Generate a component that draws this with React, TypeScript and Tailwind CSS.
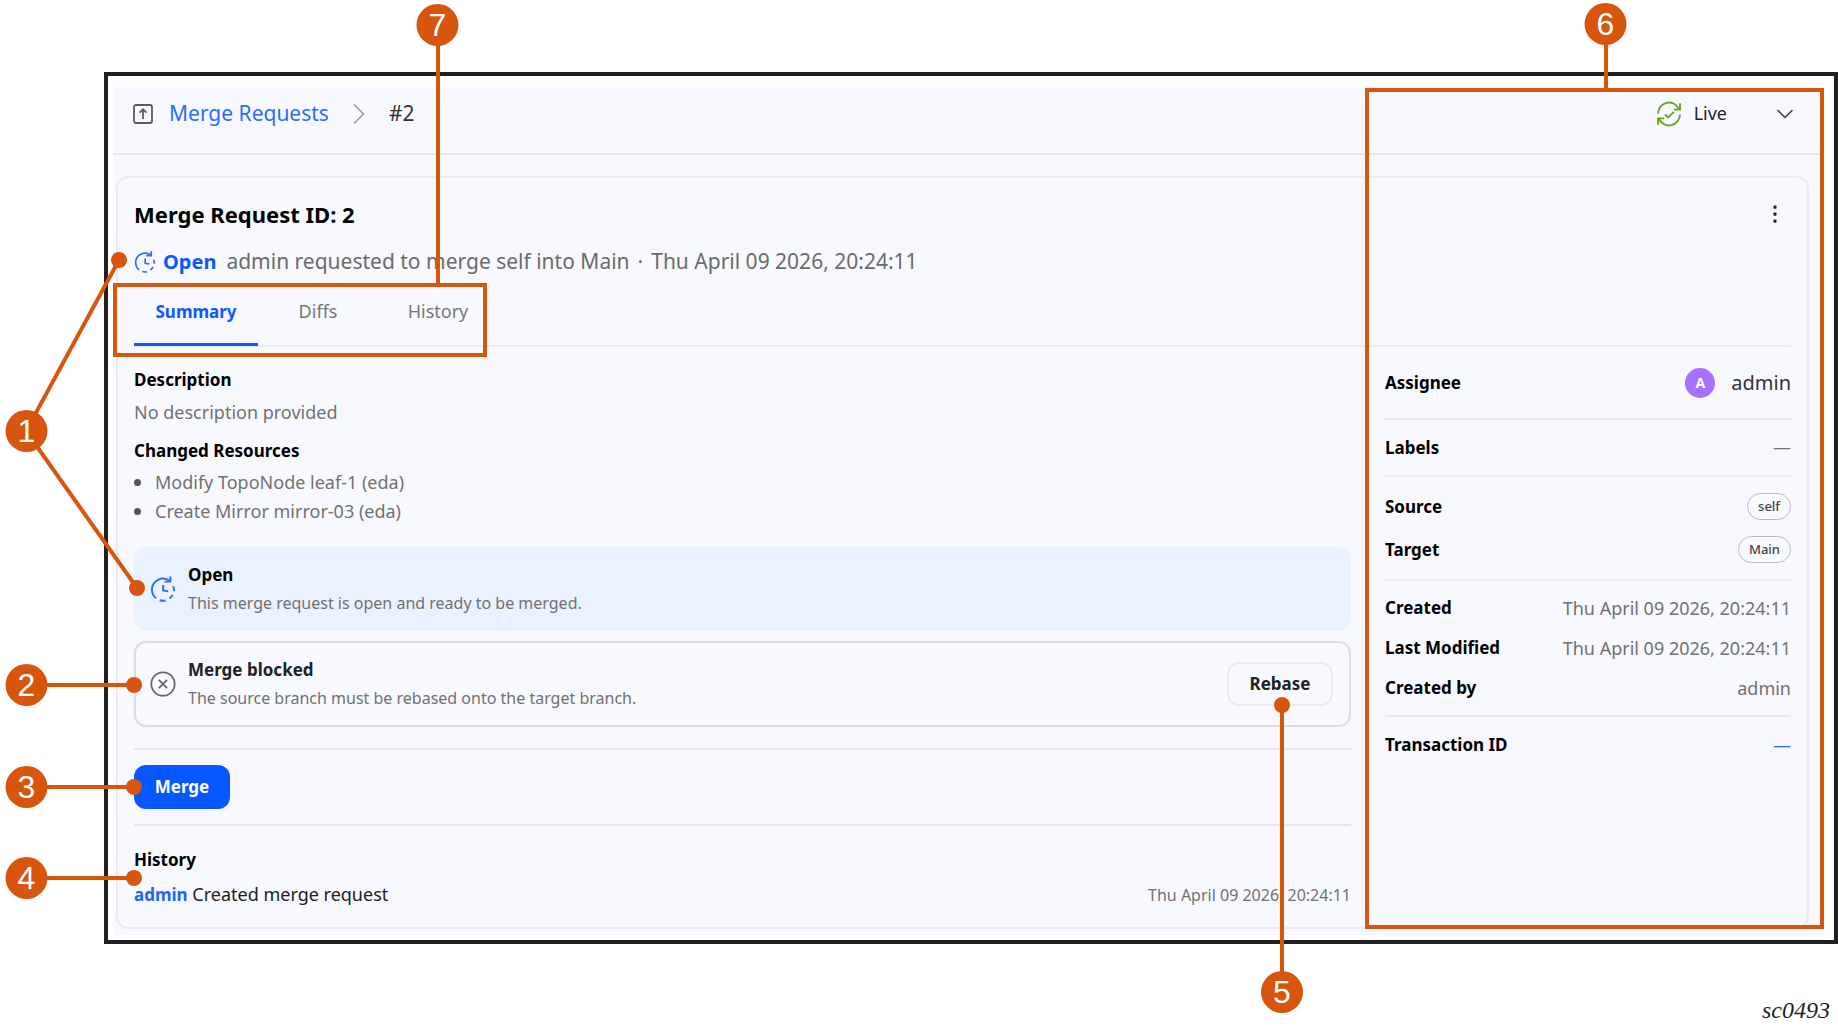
import type { ReactNode } from "react";
import { ChevronDown, ChevronRight } from "lucide-react";

const RESOURCES = ["Modify TopoNode leaf-1 (eda)", "Create Mirror mirror-03 (eda)"];

const DATE = "Thu April 09 2026, 20:24:11";

function OpenIcon({ className }: { className: string }) {
  return (
    <svg viewBox="0 0 24 24" fill="none" stroke="currentColor" strokeWidth="1.8" className={className} aria-hidden="true">
      <path d="M18.4 4.8A10.2 10.2 0 0 0 1.8 13M1.8 13A10.2 10.2 0 0 0 5.6 20.6M9 22.4a10.2 10.2 0 0 0 5.4.2M18 20.8a10.2 10.2 0 0 0 2.8-3.4M22.2 14a10.2 10.2 0 0 0-.8-4.4" />
      <path d="M18.8.4v4.8h-5.4" />
      <path d="M12.2 8.2v5.2l4.6.8" />
    </svg>
  );
}

function BlockedIcon() {
  return (
    <svg viewBox="0 0 24 24" fill="none" stroke="currentColor" strokeWidth="1.6" className="w-[26px] h-[26px] shrink-0 text-[#666]" aria-hidden="true">
      <circle cx="12" cy="12" r="10.8" />
      <path d="m8.2 8.2 7.6 7.6M15.8 8.2l-7.6 7.6" />
    </svg>
  );
}

function LiveIcon() {
  return (
    <svg viewBox="0 0 26 26" fill="none" stroke="currentColor" strokeWidth="1.9" className="w-[26px] h-[26px] text-[#68a51c]" aria-hidden="true">
      <path d="M2 12.5A11 11 0 0 1 23 8M24 2.2V8.6h-6.2" />
      <path d="M24 13.5A11 11 0 0 1 3 18M2 23.8V17.4h6.2" />
      <path d="m9 13.5 3 3 6-5.6" />
    </svg>
  );
}

function UploadIcon() {
  return (
    <svg viewBox="0 0 20 20" fill="none" stroke="currentColor" strokeWidth="1.8" className="w-5 h-5 text-[#5c5c5c]" aria-hidden="true">
      <rect x="1" y="1" width="18" height="18" rx="2" />
      <path d="M10 15V5.4M6.6 8.6 10 5.2l3.4 3.4" />
    </svg>
  );
}

function Row({ label, className, children }: { label: string; className: string; children: ReactNode }) {
  return (
    <div className={`flex items-center justify-between ${className}`}>
      <dt className="text-[17px] font-bold text-black">{label}</dt>
      <dd className="text-[18px] text-[#717171] flex items-center">{children}</dd>
    </div>
  );
}

function Pill({ children }: { children: ReactNode }) {
  return (
    <span className="h-[27px] px-[10px] flex items-center rounded-full border border-[#b9bcc2] text-[13px] font-medium text-[#444]">
      {children}
    </span>
  );
}

function Badge({ x, y, n }: { x: number; y: number; n: number }) {
  return (
    <g>
      <circle cx={x} cy={y} r="21" className="fill-[#d8550d]" />
      <text x={x} y={y + 11} textAnchor="middle" className="fill-white text-[32px]">
        {n}
      </text>
    </g>
  );
}

function Callouts() {
  return (
    <div className="absolute inset-0 overflow-hidden pointer-events-none font-['Liberation_Sans',sans-serif]">
      <svg width="600" height="1028" className="absolute left-0 top-0">
        <g fill="none" strokeWidth="4" className="stroke-[#d8550d]">
          <path d="M119 260 26 431 137 588M26 685H134M26 787H134M26 878H134M438 25V285" />
          <rect x="115" y="285" width="370" height="70" />
        </g>
        <g className="fill-[#d8550d]">
          <circle cx="119" cy="260" r="8" />
          <circle cx="137" cy="588" r="8" />
          <circle cx="134" cy="685" r="8" />
          <circle cx="134" cy="787" r="8" />
          <circle cx="134" cy="878" r="8" />
        </g>
        <Badge x={26.5} y={431} n={1} />
        <Badge x={26.5} y={685} n={2} />
        <Badge x={26.5} y={787} n={3} />
        <Badge x={26.5} y={878} n={4} />
        <Badge x={437.5} y={25} n={7} />
      </svg>
      <svg width="638" height="1028" className="absolute right-0 top-0">
        <g fill="none" strokeWidth="4" className="stroke-[#d8550d]">
          <path d="M82 705V992M406 24V90" />
          <rect x="167" y="90" width="455" height="837" />
        </g>
        <circle cx="82" cy="705" r="8" className="fill-[#d8550d]" />
        <Badge x={82} y={992} n={5} />
        <Badge x={405.5} y={24} n={6} />
      </svg>
    </div>
  );
}

export default function App() {
  return (
    <div className="relative bg-white pt-[72px] pl-[104px] font-['Noto_Sans',sans-serif] text-[17px]">
      <div className="border-4 border-[#231f20] pt-3 pl-[5px] pr-[11px] pb-[5px]">
        <div className="bg-[#f8f9fe] pb-[6px]">
          <header className="flex items-center justify-between h-[67px] pb-[14px] pl-5 pr-6 border-b-2 border-[#e3e8ef]">
            <nav className="flex items-center">
              <UploadIcon />
              <a href="#requests" className="ml-4 text-[21px] text-[#2b6bff]">
                Merge Requests
              </a>
              <ChevronRight strokeWidth={1} className="mx-3 w-9 h-9 text-[#999]" />
              <span className="text-[21px] text-[#333]">#2</span>
            </nav>
            <button className="flex items-center text-[#222]">
              <LiveIcon />
              <span className="ml-3 text-[18px]">Live</span>
              <ChevronDown strokeWidth={1.4} className="ml-11 w-7 h-7 text-[#444]" />
            </button>
          </header>

          <main className="mt-[21px] ml-[3px] mr-[14px] px-4 border-2 border-[#e8ebf1] rounded-xl">
            <div className="flex items-center justify-between h-[72px]">
              <h1 className="text-[22px] font-bold text-black">Merge Request ID: 2</h1>
              <button aria-label="More actions" className="px-[14px] py-2">
                <svg viewBox="0 0 4 20" className="w-1 h-5 fill-[#222]" aria-hidden="true">
                  <rect x="0.5" y="1.5" width="3" height="3.2" rx="0.8" />
                  <rect x="0.5" y="8.5" width="3" height="3.2" rx="0.8" />
                  <rect x="0.5" y="15.5" width="3" height="3.2" rx="0.8" />
                </svg>
              </button>
            </div>
            <div className="flex items-center h-6 text-[21px] text-[#6b6b6b]">
              <OpenIcon className="w-[22px] h-[22px] text-[#2b6bff]" />
              <span className="ml-[7px] text-[20px] font-bold text-[#0a58ff]">Open</span>
              <span className="ml-[10px]">admin requested to merge self into Main</span>
              <span className="mx-2">·</span>
              <span>{DATE}</span>
            </div>

            <div role="tablist" className="mt-[10px] flex h-[63px] border-b-2 border-[#e8ebf1] text-[18px] text-[#777]">
              <button role="tab" aria-selected="true" className="w-[124px] -mb-px pb-1 border-b-3 border-[#0a58ff] text-[17px] font-bold text-[#0a58ff]">
                Summary
              </button>
              <button role="tab" aria-selected="false" className="w-[120px] pb-[6px]">
                Diffs
              </button>
              <button role="tab" aria-selected="false" className="w-[120px] pb-[6px]">
                History
              </button>
            </div>

            <div className="flex gap-[34px]">
              <div className="flex-1 min-w-0">
                <h2 className="mt-[19px] leading-7 font-bold text-black">Description</h2>
                <p className="mt-1 text-[18px] leading-7 text-[#717171]">No description provided</p>
                <h2 className="mt-[11px] leading-7 font-bold text-black">Changed Resources</h2>
                <ul className="mt-[3px] text-[18px] text-[#717171]">
                  {RESOURCES.map((r) => (
                    <li key={r} className="flex items-center leading-[29px]">
                      <span className="w-[7px] h-[7px] mr-[14px] rounded-full bg-[#555]" />
                      {r}
                    </li>
                  ))}
                </ul>

                <section className="mt-[21px] flex items-center h-[84px] px-4 rounded-xl bg-[#ebf2ff]">
                  <OpenIcon className="w-[26px] h-[26px] shrink-0 text-[#2b6bff]" />
                  <div className="ml-3">
                    <h3 className="leading-7 font-bold text-black">Open</h3>
                    <p className="text-[16px] leading-7 text-[#717171]">This merge request is open and ready to be merged.</p>
                  </div>
                </section>

                <section className="mt-[10px] flex items-center h-[86px] pl-[14px] pr-4 rounded-xl border-2 border-[#d9dde4]">
                  <BlockedIcon />
                  <div className="ml-3">
                    <h3 className="leading-7 font-bold text-[#222]">Merge blocked</h3>
                    <p className="text-[16px] leading-7 text-[#717171]">The source branch must be rebased onto the target branch.</p>
                  </div>
                  <button className="ml-auto w-[106px] h-[44px] rounded-xl border-2 border-[#e8ebf1] font-bold text-[#222]">
                    Rebase
                  </button>
                </section>

                <div className="mt-[21px] py-[15px] border-y-2 border-[#e3e8ef]">
                  <button className="block w-24 h-11 rounded-xl bg-[#0558ff] font-bold text-white">Merge</button>
                </div>

                <h2 className="mt-5 leading-7 font-bold text-black">History</h2>
                <div className="mt-[6px] mb-[18px] flex items-center justify-between text-[18px] leading-7 text-[#222]">
                  <p>
                    <a href="#admin" className="text-[17px] font-bold text-[#1f63ff]">
                      admin
                    </a>{" "}
                    Created merge request
                  </p>
                  <time className="text-[16px] text-[#717171]">{DATE}</time>
                </div>
              </div>

              <dl className="w-[406px] shrink-0">
                <Row label="Assignee" className="h-[73px] border-b-2 border-[#e3e8ef]">
                  <span className="w-[30px] h-[30px] mr-4 flex items-center justify-center rounded-full bg-[#a770ff] text-[14px] font-bold text-white">
                    A
                  </span>
                  <span className="text-[20px] text-[#333]">admin</span>
                </Row>
                <Row label="Labels" className="h-[57px] border-b-2 border-[#e8ebf1]">
                  —
                </Row>
                <div className="py-2 border-b-2 border-[#e8ebf1]">
                  <Row label="Source" className="h-[43px]">
                    <Pill>self</Pill>
                  </Row>
                  <Row label="Target" className="h-[43px]">
                    <Pill>Main</Pill>
                  </Row>
                </div>
                <div className="py-[7px] border-b-2 border-[#e3e8ef]">
                  <Row label="Created" className="h-10">
                    {DATE}
                  </Row>
                  <Row label="Last Modified" className="h-10">
                    {DATE}
                  </Row>
                  <Row label="Created by" className="h-10">
                    admin
                  </Row>
                </div>
                <Row label="Transaction ID" className="h-14">
                  <a href="#transaction" className="text-[#2b6bff]">
                    —
                  </a>
                </Row>
              </dl>
            </div>
          </main>
        </div>
      </div>
      <p className="h-[85px] pt-[50px] pr-2 text-right font-['Liberation_Serif',serif] italic text-[24px] leading-8 text-[#231f20]">
        sc0493
      </p>
      <Callouts />
    </div>
  );
}
